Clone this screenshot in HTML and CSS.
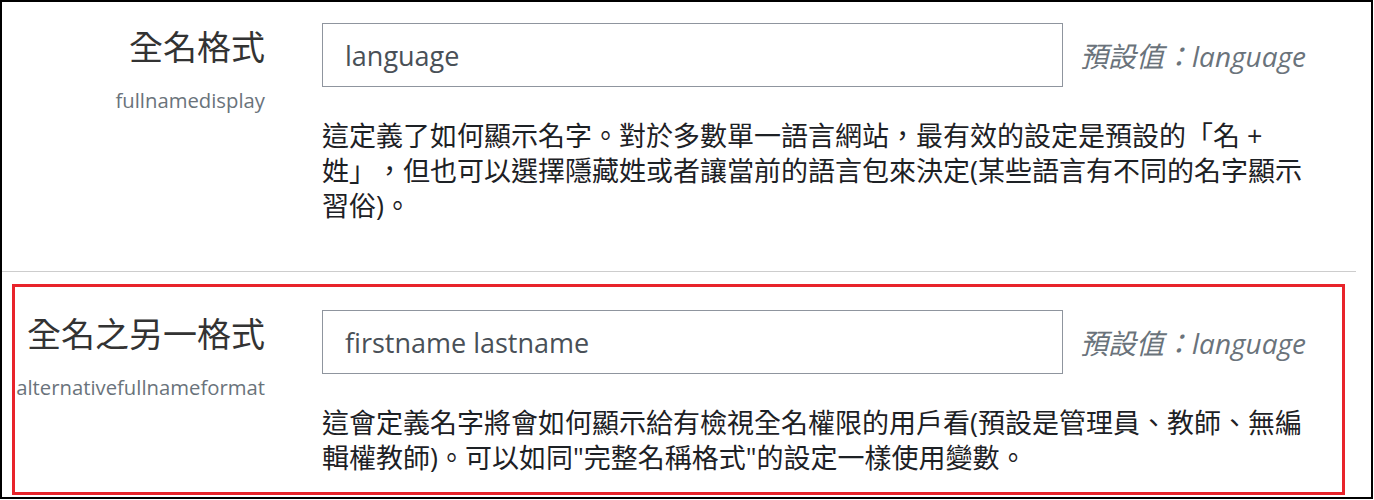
FILE: index.html
```html
<!DOCTYPE html>
<html lang="zh-Hant">
<head>
<meta charset="utf-8">
<title>全名格式</title>
<link rel="stylesheet" href="styles.css">
</head>
<body>
<div class="frame">
  <div class="setting first">
    <div class="label-col">
      <div class="title">全名格式</div>
      <div class="key">fullnamedisplay</div>
    </div>
    <div class="form-col">
      <div class="field-row">
        <input class="text-input" type="text" value="language">
        <div class="default">預設值：language</div>
      </div>
      <div class="desc">這定義了如何顯示名字。對於多數單一語言網站，最有效的設定是預設的「名 + 姓」，但也可以選擇隱藏姓或者讓當前的語言包來決定(某些語言有不同的名字顯示習俗)。</div>
    </div>
  </div>
  <div class="setting highlighted">
    <div class="label-col">
      <div class="title">全名之另一格式</div>
      <div class="key">alternativefullnameformat</div>
    </div>
    <div class="form-col">
      <div class="field-row">
        <input class="text-input" type="text" value="firstname lastname">
        <div class="default">預設值：language</div>
      </div>
      <div class="desc">這會定義名字將會如何顯示給有檢視全名權限的用戶看(預設是管理員、教師、無編輯權教師)。可以如同"完整名稱格式"的設定一樣使用變數。</div>
    </div>
  </div>
</div>
</body>
</html>
```
FILE: styles.css
```css
html, body {
  margin: 0;
  padding: 0;
  background: #fff;
}

body {
  font-family: "Open Sans", "Noto Sans CJK TC", sans-serif;
  color: #1d2125;
  text-spacing-trim: space-all;
}

.frame {
  box-sizing: border-box;
  width: 1373px;
  height: 499px;
  border: 2px solid #000;
  overflow: hidden;
}

.setting {
  box-sizing: border-box;
  display: grid;
  column-gap: 57px;
  align-items: start;
}

.setting.first {
  width: 1354px;
  height: 270px;
  padding-top: 21px;
  border-bottom: 1px solid #cdcdcd;
  grid-template-columns: 263px 1000px;
}

.setting.highlighted {
  width: 1333px;
  height: 211px;
  margin: 12px 0 0 10px;
  padding-top: 23px;
  border: 3px solid #e8232a;
  grid-template-columns: 250px 1000px;
}

.label-col {
  text-align: right;
}

.title {
  font-family: "Noto Sans CJK TC", sans-serif;
  font-size: 34px;
  line-height: 45px;
  color: #333;
}

.key {
  margin-top: 20px;
  font-size: 20.3px;
  line-height: 24px;
  color: #6a737b;
  white-space: nowrap;
}

.field-row {
  display: flex;
  align-items: center;
}

.text-input {
  box-sizing: border-box;
  width: 741px;
  height: 64px;
  margin: 0;
  padding: 0 22px;
  border: 1px solid #8f959e;
  border-radius: 0;
  background: #fff;
  font-family: "Open Sans", "Noto Sans CJK TC", sans-serif;
  font-size: 27px;
  color: #495057;
  outline: none;
}

.default {
  margin-left: 17px;
  font-size: 28px;
  font-style: italic;
  color: #6a737b;
  white-space: nowrap;
}

.desc {
  margin-top: 31px;
  font-size: 27px;
  line-height: 35px;
  color: #1d2125;
}
```
